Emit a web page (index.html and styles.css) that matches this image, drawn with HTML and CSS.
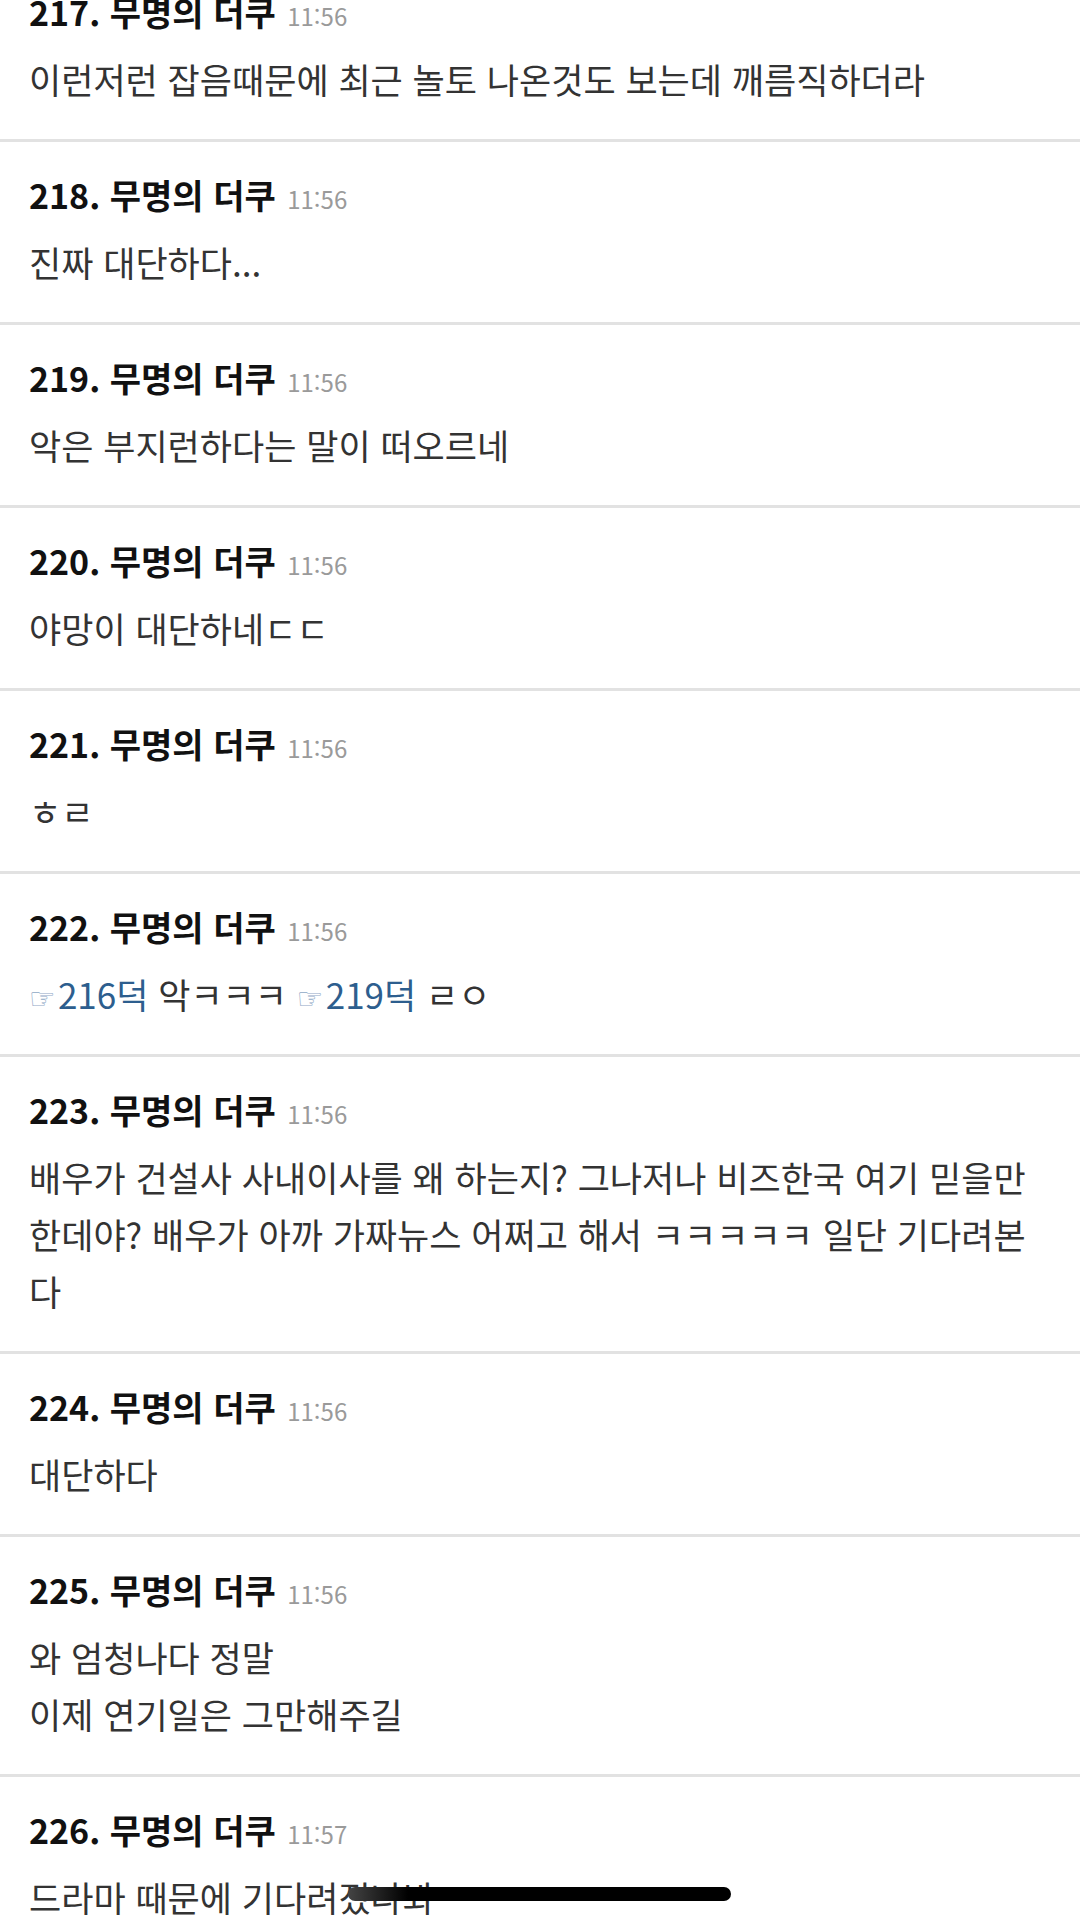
FILE: index.html
```html
<!DOCTYPE html>
<html lang="ko">
  <head>
    <meta charset="UTF-8">
    <meta name="viewport" content="width=device-width, initial-scale=1.0">
    <title>댓글</title>
    <link rel="stylesheet" href="styles.css">
  </head>
  <body>
    <ul class="comments">
      <li class="comment">
        <div class="comment-head">217. 무명의 더쿠 <span class="time">11:56</span></div>
        <div class="comment-body">이런저런 잡음때문에 최근 놀토 나온것도 보는데 깨름직하더라</div>
      </li>
      <li class="comment">
        <div class="comment-head">218. 무명의 더쿠 <span class="time">11:56</span></div>
        <div class="comment-body">진짜 대단하다...</div>
      </li>
      <li class="comment">
        <div class="comment-head">219. 무명의 더쿠 <span class="time">11:56</span></div>
        <div class="comment-body">악은 부지런하다는 말이 떠오르네</div>
      </li>
      <li class="comment">
        <div class="comment-head">220. 무명의 더쿠 <span class="time">11:56</span></div>
        <div class="comment-body">야망이 대단하네ㄷㄷ</div>
      </li>
      <li class="comment">
        <div class="comment-head">221. 무명의 더쿠 <span class="time">11:56</span></div>
        <div class="comment-body">ㅎㄹ</div>
      </li>
      <li class="comment">
        <div class="comment-head">222. 무명의 더쿠 <span class="time">11:56</span></div>
        <div class="comment-body"><a class="reply" href="#"><span class="hand">☞</span>216덕</a> 악ㅋㅋㅋ <a class="reply" href="#"><span class="hand">☞</span>219덕</a> ㄹㅇ</div>
      </li>
      <li class="comment">
        <div class="comment-head">223. 무명의 더쿠 <span class="time">11:56</span></div>
        <div class="comment-body">배우가 건설사 사내이사를 왜 하는지? 그나저나 비즈한국 여기 믿을만한데야? 배우가 아까 가짜뉴스 어쩌고 해서 ㅋㅋㅋㅋㅋ 일단 기다려본다</div>
      </li>
      <li class="comment">
        <div class="comment-head">224. 무명의 더쿠 <span class="time">11:56</span></div>
        <div class="comment-body">대단하다</div>
      </li>
      <li class="comment">
        <div class="comment-head">225. 무명의 더쿠 <span class="time">11:56</span></div>
        <div class="comment-body">와 엄청나다 정말<br>이제 연기일은 그만해주길</div>
      </li>
      <li class="comment">
        <div class="comment-head">226. 무명의 더쿠 <span class="time">11:57</span></div>
        <div class="comment-body">드라마 때문에 기다려졌나봐</div>
      </li>
    </ul>

    <div class="home-bar"></div>
  </body>
</html>
```

FILE: styles.css
```css
body {
    margin: 0;
    background-color: white;
    font-family: "Noto Sans CJK KR", "Noto Sans", sans-serif;
    color: #333;
    overflow: hidden;
}
.comments {
    list-style: none;
    margin: -41px 0 0 0;
    padding: 0;
}
.comment {
    padding: 31px 29px 32px;
    border-bottom: 3px solid #e2e2e2;
}
.comment-head {
    font-size: 34px;
    font-weight: bold;
    line-height: 44px;
    height: 44px;
    color: #111;
}
.time {
    font-size: 24px;
    font-weight: normal;
    line-height: 1;
    color: #9a9a9a;
    margin-left: 2px;
}
.comment-body {
    margin-top: 16px;
    font-size: 35px;
    line-height: 57px;
    color: #333;
}
.reply {
    color: #2d5e8e;
    text-decoration: none;
}
.hand {
    font-family: "DejaVu Sans", sans-serif;
    font-size: 30px;
    line-height: 1;
    color: #8fa9c6;
    margin-right: 2px;
}
.home-bar {
    position: fixed;
    left: 348px;
    bottom: 22px;
    width: 383px;
    height: 14px;
    border-radius: 7px;
    background: linear-gradient(to right, #444 0px, #000 60px);
}
```
